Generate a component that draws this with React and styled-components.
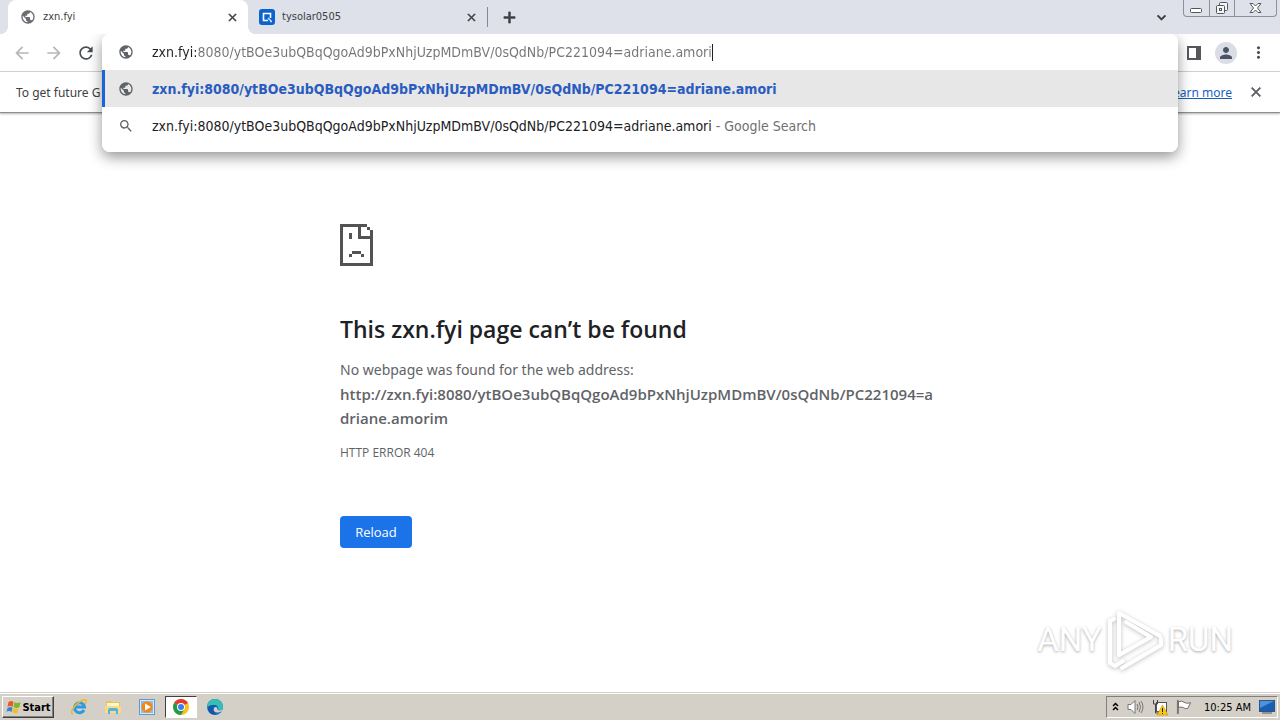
import React from "react";
import styled, { createGlobalStyle, css } from "styled-components";
import {
  MdAdd,
  MdArrowBack,
  MdArrowForward,
  MdClose,
  MdExpandMore,
  MdMoreVert,
  MdPerson,
  MdPublic,
  MdRefresh,
  MdSearch,
} from "react-icons/md";

const uiFont = '"DejaVu Sans Condensed", "Noto Sans", sans-serif';
const pageFont = '"Noto Sans", "Open Sans", sans-serif';
const strongFont = '"Open Sans", "Noto Sans", sans-serif';

const typedUrl =
  "zxn.fyi:8080/ytBOe3ubQBqQgoAd9bPxNhjUzpMDmBV/0sQdNb/PC221094=adriane.amori";
const failedUrl = `http://${typedUrl}m`;

const GlobalStyle = createGlobalStyle`
  * {
    box-sizing: border-box;
  }

  body {
    margin: 0;
    background: #fff;
  }
`;

const Screen = styled.div`
  display: flex;
  flex-direction: column;
  min-height: 100vh;
  overflow: hidden;
  font-family: ${uiFont};
  font-size: 12px;
  color: #3c4043;
`;

const IconButton = styled.button`
  display: flex;
  align-items: center;
  justify-content: center;
  flex: none;
  width: ${(props) => props.$size || 32}px;
  height: ${(props) => props.$size || 32}px;
  padding: 0;
  border: 0;
  border-radius: 50%;
  background: ${(props) => props.$fill || "transparent"};
  color: ${(props) => props.$color || "#5f6368"};

  path:not([fill="none"]) {
    stroke: currentColor;
    stroke-width: ${(props) => (props.$bold ? 1 : 0)};
  }
`;

/* tab strip */

const TabStrip = styled.header`
  display: flex;
  align-items: center;
  height: 34px;
  padding: 0 3px 0 8px;
  background: #dee1e9;
`;

const Tab = styled.div`
  position: relative;
  display: flex;
  align-items: center;
  width: 240px;
  height: 34px;
  padding: 0 8px 0 12px;
  border-radius: 8px 8px 0 0;

  & + & {
    margin-left: -1px;
  }

  ${(props) =>
    props.$active &&
    css`
      background: #fff;

      &::before,
      &::after {
        content: "";
        position: absolute;
        bottom: 0;
        width: 8px;
        height: 8px;
      }
      &::before {
        left: -8px;
        background: radial-gradient(circle at 0 0, transparent 8px, #fff 8px);
      }
      &::after {
        right: -8px;
        background: radial-gradient(circle at 100% 0, transparent 8px, #fff 8px);
      }
    `}
`;

const TabTitle = styled.span`
  flex: 1;
  margin-left: 7px;
  font-size: 11px;
  line-height: 18px;
`;

const TabDivider = styled.div`
  width: 1px;
  height: 20px;
  margin-right: 7px;
  background: #85888f;
`;

const Spacer = styled.div`
  flex: 1;
`;

const WindowButtons = styled.div`
  display: flex;
  align-self: flex-start;
  height: 17px;
  margin-left: 8px;
  border: 1px solid #8d9097;
  border-top: 0;
  border-radius: 0 0 4px 4px;
`;

const WindowButton = styled.button`
  display: flex;
  align-items: center;
  justify-content: center;
  width: ${(props) => props.$width}px;
  padding: 0;
  border: 0;
  background: transparent;

  & + & {
    border-left: 1px solid #8d9097;
  }
`;

/* toolbar and address bar */

const Toolbar = styled.div`
  display: flex;
  align-items: center;
  height: 38px;
  padding-left: 6px;
  background: #fff;
  border-bottom: 1px solid #d3d4d6;
`;

const AddressSlot = styled.div`
  position: relative;
  flex: 1;
  align-self: stretch;
`;

const AddressPopup = styled.div`
  position: absolute;
  top: 0;
  left: 0;
  right: 0;
  z-index: 2;
  padding-bottom: 8px;
  overflow: hidden;
  border-radius: 8px;
  background: #fff;
`;

const PopupShadow = styled(AddressPopup)`
  z-index: 1;
  height: 118px;
  box-shadow: 0 5px 14px rgba(0, 0, 0, 0.42);
  clip-path: inset(0 -24px -24px -24px);
`;

const PopupRow = styled.div`
  display: flex;
  align-items: center;
  height: ${(props) => (props.$input ? 36 : 37)}px;
  padding-left: ${(props) => (props.$selected ? 13 : 16)}px;
  border-left: ${(props) => (props.$selected ? "3px solid #1a63d8" : "0")};
  background: ${(props) => (props.$selected ? "#e7e7e7" : "#fff")};
  color: ${(props) => (props.$selected ? "#2a5cc0" : "#202124")};
  font-size: 14px;
  font-weight: ${(props) => (props.$selected ? 700 : 400)};
  white-space: nowrap;

  svg {
    flex: none;
    margin-right: 18px;
    color: #5f6368;
  }
`;

const UrlInput = styled.input`
  field-sizing: content;
  padding: 0;
  border: 0;
  outline: 0;
  font: inherit;
  color: transparent;
  background: linear-gradient(90deg, #202124 45px, #757575 45px);
  background-clip: text;
`;

const Caret = styled.span`
  width: 1px;
  height: 17px;
  background: #202124;
`;

const Muted = styled.span`
  color: #707070;
  white-space: pre;
`;

const ToolbarEnd = styled.div`
  display: flex;
  align-items: center;
  padding-right: 6px;
`;

const InfoBar = styled.div`
  display: flex;
  align-items: center;
  height: 41px;
  padding: 0 12px 0 16px;
  border-bottom: 1px solid #8f8f8f;
  box-shadow: 0 1px 2px rgba(0, 0, 0, 0.3);
  font-family: ${pageFont};
  font-size: 12px;
`;

const InfoLink = styled.a`
  margin-right: 12px;
  color: #1a5fc0;
`;

/* page */

const Page = styled.main`
  position: relative;
  flex: 1;
  font-family: ${pageFont};
`;

const ErrorBox = styled.div`
  max-width: 600px;
  margin: 0 auto;
  padding-top: 111px;
  color: #5f6368;
  font-size: 14px;
  line-height: 24px;
`;

const ErrorTitle = styled.h1`
  margin: 46px 0 12px;
  color: #202124;
  font-family: ${strongFont};
  font-size: 23px;
  font-weight: 600;
  line-height: 34px;
`;

const ErrorText = styled.p`
  margin: 0;
`;

const ErrorAddress = styled.strong`
  display: block;
  font-family: ${strongFont};
  font-size: 15px;
  font-weight: 600;
  word-break: break-all;
`;

const ErrorCode = styled.div`
  margin-top: 11px;
  font-family: ${strongFont};
  font-size: 12px;
`;

const ReloadButton = styled.button`
  display: block;
  width: 72px;
  height: 32px;
  margin-top: 51px;
  padding: 0;
  border: 0;
  border-radius: 4px;
  background: #1a73e8;
  color: #fff;
  font-family: ${strongFont};
  font-size: 13px;
`;

const Watermark = styled.div`
  position: absolute;
  right: 47px;
  bottom: 20px;
  display: flex;
  align-items: center;
  gap: 4px;
  color: #fff;
  font-family: Roboto, sans-serif;
  font-size: 33px;
  line-height: 64px;
  text-shadow: 0 1px 3px rgba(0, 0, 0, 0.35);

  svg {
    filter: drop-shadow(0 1px 2px rgba(0, 0, 0, 0.25));
  }
`;

/* taskbar */

const Taskbar = styled.footer`
  display: flex;
  align-items: center;
  gap: 2px;
  height: 28px;
  padding: 1px 2px 0;
  border-top: 1px solid #d4d0c8;
  box-shadow: inset 0 1px #fff;
  background: #d4d0c8;
  color: #000;
`;

const StartButton = styled.button`
  display: flex;
  align-items: center;
  justify-content: center;
  width: 52px;
  height: 22px;
  margin-right: 7px;
  padding: 0;
  border: 1px solid;
  border-color: #fff #404040 #404040 #fff;
  box-shadow: inset -1px -1px #808080;
  background: #d4d0c8;
  font-family: ${uiFont};
  font-size: 11px;
  font-weight: 700;
`;

const TaskButton = styled.button`
  display: flex;
  align-items: center;
  justify-content: center;
  width: 32px;
  height: 22px;
  padding: 0;
  border: 1px solid;
  border-color: ${(props) =>
    props.$active ? "#404040 #fff #fff #404040" : "transparent"};
  background: ${(props) => (props.$active ? "#fff" : "transparent")};
`;

const Tray = styled.div`
  display: flex;
  align-items: center;
  gap: 8px;
  height: 22px;
  padding: 0 2px 0 5px;
  border: 1px solid;
  border-color: #808080 #fff #fff #808080;
  font-size: 11px;
`;

const Clock = styled.time`
  margin-left: 4px;
`;

const SadPage = () => (
  <svg width="33" height="42" viewBox="0 0 11 14" display="block" shapeRendering="crispEdges">
    <path
      fill="#535353"
      d="M0 0h9v1h1v1h1v12H0zM1 1v12h9V5H6V1zM7 1v3h3V2H9V1zM3 3h1v2H3zM4 9h3v1H4zM3 10h1v1H3zM7 10h1v1H7z"
      fillRule="evenodd"
    />
  </svg>
);

const QLogo = () => (
  <svg width="16" height="16" viewBox="0 0 16 16">
    <rect width="16" height="16" rx="3" fill="#0b63ce" />
    <path d="M9 11.500H4.500v-7h7V9" fill="none" stroke="#fff" strokeWidth="1.600" />
    <path d="M9 9l3.500 3.500M11 12.500h2" stroke="#bfe0ff" strokeWidth="1.500" />
  </svg>
);

const SidePanel = () => (
  <svg width="14" height="14" viewBox="0 0 14 14">
    <path d="M0 0h14v14H0zM2 2v10h7V2z" fill="#55575b" fillRule="evenodd" />
  </svg>
);

const PlayMark = () => (
  <svg width="58" height="64" viewBox="0 0 58 64" fill="none" stroke="#fff" strokeWidth="4" strokeLinejoin="round" strokeLinecap="round">
    <path d="M13 47V5L54 28" />
    <path d="M8 11L4 13v42l5 3 8-5" />
    <path d="M13 22v25l32-18L20 14" />
    <path d="M16 60l39-23v-6" />
  </svg>
);

const WindowsFlag = () => (
  <svg width="17" height="16" viewBox="0 0 16 16">
    <path d="M3 3q3-2 5 0L7 8Q4 6 2 8z" fill="#ec5a1f" />
    <path d="M9 3q3 2 6 0l-1 5q-3 2-6 0z" fill="#7db72f" />
    <path d="M2 9q3-2 5 0l-1 4q-3-2-5 0z" fill="#2f87d8" />
    <path d="M8 9q3 2 5 0l-1 5q-3 1-5-1z" fill="#fbbc14" />
  </svg>
);

const ExplorerIcon = () => (
  <svg width="18" height="18" viewBox="0 0 18 18" fill="none">
    <path d="M14 12a5 5 0 1 1 .5-3H5" stroke="#2a9be0" strokeWidth="3" />
    <path d="M3 16c-4-1 1-9 8-13 6-3 6 0 4 3" stroke="#e8b830" strokeWidth="1.5" />
  </svg>
);

const FolderIcon = () => (
  <svg width="18" height="18" viewBox="0 0 18 18">
    <path d="M2 3h5l1 1h8v10H2z" fill="#e9c45a" />
    <path d="M3 5h12v4H3z" fill="#fff6c9" />
    <path d="M1 8h16v7H1z" fill="#f7dc85" />
    <path d="M4 16v-4q0-2 2-2h6q2 0 2 2v4h-2v-3H6v3z" fill="#58b3dc" />
  </svg>
);

const MediaIcon = () => (
  <svg width="18" height="18" viewBox="0 0 18 18">
    <rect x="1" y="1" width="16" height="16" fill="#5d9bd5" />
    <rect x="2" y="2" width="14" height="14" fill="#d8e8f4" />
    <rect x="3" y="3" width="12" height="12" fill="#8fbce0" />
    <circle cx="9" cy="9" r="5.500" fill="#f58516" />
    <path d="M7 5.5v7L13 9z" fill="#fff" />
  </svg>
);

const ChromeIcon = () => (
  <svg width="16" height="16" viewBox="0 0 16 16">
    <circle cx="8" cy="8" r="8" fill="#fbc116" />
    <path d="M8 8L1.1 4A8 8 0 0 1 14.9 4z" fill="#e33b2e" />
    <path d="M8 8L1.1 4A8 8 0 0 0 8 16l3.5-6z" fill="#229a4c" />
    <circle cx="8" cy="8" r="4" fill="#fff" />
    <circle cx="8" cy="8" r="3" fill="#3b7ded" />
  </svg>
);

const EdgeIcon = () => (
  <svg width="16" height="16" viewBox="0 0 16 16">
    <circle cx="8" cy="8" r="8" fill="#1272c4" />
    <path d="M0 8a8 8 0 0 1 16 0c0 3-3 4-5 3 1-3-1-5-4-5S1 7 0 8z" fill="#35bfb4" />
    <path d="M6 8q-1 5 4 7-6 2-9-4 0-5 6-5 3 0 4 3-2-3-5-1z" fill="#1a54a5" />
    <path d="M8 8q3 0 2 2 2 3 6 0l-1 2q-5 3-8 0-1-2 1-4z" fill="#d4d0c8" />
  </svg>
);

const TrayArrows = () => (
  <svg width="7" height="10" viewBox="0 0 7 10" fill="none" stroke="#000" strokeWidth="1.5">
    <path d="M1 4l2.5-2.5L6 4M1 8l2.5-2.5L6 8" />
  </svg>
);

const SpeakerIcon = () => (
  <svg width="17" height="16" viewBox="0 0 17 16" fill="none" stroke="#777">
    <path d="M1 5.5h3l4-4v13l-4-4H1z" fill="#fff" />
    <path d="M10 5q2 3 0 6M12 3q3 5 0 10M14 2q4 6 0 12" />
  </svg>
);

const NetworkIcon = () => (
  <svg width="16" height="17" viewBox="0 0 16 17">
    <rect x="4.5" y="3.5" width="10" height="9" fill="#fff" stroke="#555" />
    <path d="M1.5 1v4h4V1M3.5 5v9h4" fill="none" stroke="#444" />
    <path d="M10.500 6l5.500 10H5z" fill="#ffc80a" stroke="#b98500" strokeWidth=".5" />
    <path d="M10.500 9v4M10.500 14v1" stroke="#222" />
  </svg>
);

const FlagIcon = () => (
  <svg width="16" height="16" viewBox="0 0 17 16" fill="#fff" stroke="#666">
    <path d="M2.5 2.5q4-2 7 1 3 1 6 0l-3 6q-3 1-5-1-2-1-5 0zM1.500 1v14h1V1z" />
  </svg>
);

const DesktopIcon = () => (
  <svg width="16" height="14" viewBox="0 0 16 14">
    <rect x=".5" y=".5" width="15" height="11" fill="#1b5fb4" stroke="#30557f" />
    <path d="M1 1h14L1 8z" fill="#4b93dc" />
    <path d="M3 13h10" stroke="#555" />
  </svg>
);

export default function App() {
  return (
    <Screen>
      <GlobalStyle />
      <TabStrip>
        <Tab $active>
          <MdPublic size={16} color="#6a6e73" />
          <TabTitle>zxn.fyi</TabTitle>
          <IconButton $size={16} $bold $color="#3c4043" aria-label="Close zxn.fyi">
            <MdClose size={13} />
          </IconButton>
        </Tab>
        <Tab>
          <QLogo />
          <TabTitle>tysolar0505</TabTitle>
          <IconButton $size={16} $bold $color="#3c4043" aria-label="Close tysolar0505">
            <MdClose size={13} />
          </IconButton>
        </Tab>
        <TabDivider />
        <IconButton $size={28} $bold $color="#3c4043" aria-label="New tab">
          <MdAdd size={19} />
        </IconButton>
        <Spacer />
        <IconButton $size={28} $bold $color="#3c4043" aria-label="Search tabs">
          <MdExpandMore size={17} />
        </IconButton>
        <WindowButtons>
          <WindowButton $width={25} aria-label="Minimize">
            <svg width="13" height="12" fill="#fff" stroke="#555">
              <rect x=".5" y="6.500" width="11" height="4" rx="1" />
            </svg>
          </WindowButton>
          <WindowButton $width={25} aria-label="Restore">
            <svg width="14" height="14" fill="#f4f5f8" stroke="#555">
              <rect x="4.500" y="1.500" width="8" height="8" rx="1" />
              <rect x="1.500" y="4.500" width="8" height="8" rx="1" />
              <rect x="4.500" y="7.500" width="2" height="2" />
            </svg>
          </WindowButton>
          <WindowButton $width={42} aria-label="Close window">
            <svg width="13" height="12" viewBox="0 0 13 12" fill="#fff" stroke="#555">
              <path d="M1 1.500h3l2.500 2.500L9 1.500h3L8.500 6l3.500 4.500H9L6.500 8 4 10.500H1L4.500 6z" />
            </svg>
          </WindowButton>
        </WindowButtons>
      </TabStrip>

      <Toolbar>
        <IconButton $color="#b5b7ba" aria-label="Back">
          <MdArrowBack size={20} />
        </IconButton>
        <IconButton $color="#b5b7ba" aria-label="Forward">
          <MdArrowForward size={20} />
        </IconButton>
        <IconButton $color="#4a4d51" aria-label="Reload page">
          <MdRefresh size={20} />
        </IconButton>
        <AddressSlot>
          <PopupShadow />
          <AddressPopup>
            <PopupRow $input>
              <MdPublic size={16} />
              <UrlInput aria-label="Address" defaultValue={typedUrl} />
              <Caret />
            </PopupRow>
            <PopupRow $selected>
              <MdPublic size={16} />
              {typedUrl}
            </PopupRow>
            <PopupRow>
              <MdSearch size={16} />
              {typedUrl}
              <Muted> - Google Search</Muted>
            </PopupRow>
          </AddressPopup>
        </AddressSlot>
        <ToolbarEnd>
          <IconButton aria-label="Side panel">
            <SidePanel />
          </IconButton>
          <IconButton aria-label="Profile">
            <IconButton as="span" $size={22} $fill="#dadde4" $color="#4a5368">
              <MdPerson size={18} />
            </IconButton>
          </IconButton>
          <IconButton $color="#4a4d51" aria-label="Menu">
            <MdMoreVert size={19} />
          </IconButton>
        </ToolbarEnd>
      </Toolbar>
      <InfoBar>
        <span>To get future G</span>
        <Spacer />
        <InfoLink href="#learn">Learn more</InfoLink>
        <IconButton $size={24} $bold aria-label="Dismiss">
          <MdClose size={16} />
        </IconButton>
      </InfoBar>

      <Page>
        <ErrorBox>
          <SadPage />
          <ErrorTitle>This zxn.fyi page can’t be found</ErrorTitle>
          <ErrorText>No webpage was found for the web address:</ErrorText>
          <ErrorAddress>{failedUrl}</ErrorAddress>
          <ErrorCode>HTTP ERROR 404</ErrorCode>
          <ReloadButton>Reload</ReloadButton>
        </ErrorBox>
        <Watermark>
          <span>ANY</span>
          <PlayMark />
          <span>RUN</span>
        </Watermark>
      </Page>

      <Taskbar>
        <StartButton>
          <WindowsFlag />
          Start
        </StartButton>
        <TaskButton aria-label="Internet Explorer">
          <ExplorerIcon />
        </TaskButton>
        <TaskButton aria-label="File Explorer">
          <FolderIcon />
        </TaskButton>
        <TaskButton aria-label="Media Player">
          <MediaIcon />
        </TaskButton>
        <TaskButton $active aria-label="Chrome">
          <ChromeIcon />
        </TaskButton>
        <TaskButton aria-label="Edge">
          <EdgeIcon />
        </TaskButton>
        <Spacer />
        <Tray>
          <TrayArrows />
          <SpeakerIcon />
          <NetworkIcon />
          <FlagIcon />
          <Clock>10:25 AM</Clock>
          <DesktopIcon />
        </Tray>
      </Taskbar>
    </Screen>
  );
}
